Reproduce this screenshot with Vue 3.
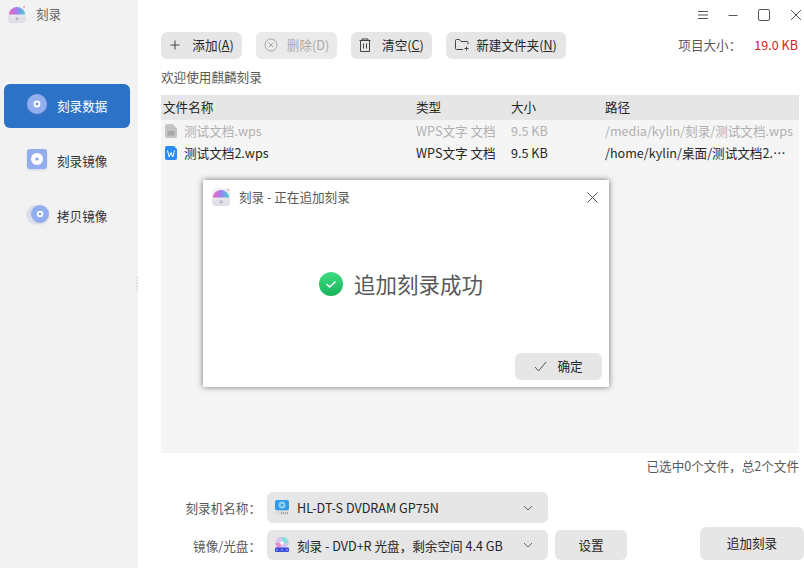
<script setup>
const nav = [
  { label: '刻录数据', kind: 'disc', active: true },
  { label: '刻录镜像', kind: 'image', active: false },
  { label: '拷贝镜像', kind: 'copy', active: false },
]
const rows = [
  { name: '测试文档.wps', type: 'WPS文字 文档', size: '9.5 KB', path: '/media/kylin/刻录/测试文档.wps', off: true },
  { name: '测试文档2.wps', type: 'WPS文字 文档', size: '9.5 KB', path: '/home/kylin/桌面/测试文档2.…', off: false },
]
</script>

<template>
  <div class="app">
    <aside class="side">
      <div class="brand">
        <svg class="logo" width="18" height="18" viewBox="0 0 18 18">
          <defs>
            <linearGradient id="lg1" x1="0" y1="0" x2="1" y2="0">
              <stop offset="0" stop-color="#f066b8" /><stop offset=".5" stop-color="#a07ff0" /><stop offset="1" stop-color="#3fd6d0" />
            </linearGradient>
            <linearGradient id="lg0" x1="0" y1="0" x2="0" y2="1">
              <stop offset="0" stop-color="#f4f4f8" /><stop offset="1" stop-color="#dcdce6" />
            </linearGradient>
          </defs>
          <rect x="0" y="0" width="18" height="18" rx="4" fill="url(#lg0)" />
          <path d="M1 9.500a8 7.500 0 0 1 16 0z" fill="url(#lg1)" />
          <circle cx="9" cy="13.800" r="1.500" fill="#b5b5c0" />
          <circle cx="16" cy="2" r=".8" fill="#f0605a" />
        </svg>
        <span>刻录</span>
      </div>
      <nav class="nav">
        <div v-for="n in nav" :key="n.label" class="nav-item" :class="{ active: n.active }">
          <svg class="nav-icon" width="22" height="22" viewBox="0 0 22 22">
            <template v-if="n.kind === 'disc'">
              <circle cx="10" cy="10" r="10" fill="#93aeee" />
              <circle cx="10" cy="10" r="3.400" fill="#fff" />
              <circle cx="10" cy="10" r="1.400" fill="#6d8fdc" />
            </template>
            <template v-else-if="n.kind === 'image'">
              <rect x="0" y="0" width="20" height="20" rx="3" fill="#93aeee" />
              <circle cx="10" cy="10" r="6" fill="#fff" />
              <circle cx="10" cy="10" r="1.500" fill="#7b9ae2" />
            </template>
            <template v-else>
              <circle cx="9" cy="10" r="9" fill="#d9dde8" />
              <circle cx="13" cy="10" r="9" fill="#93aeee" />
              <circle cx="13" cy="10" r="3.200" fill="#fff" />
              <circle cx="13" cy="10" r="1.300" fill="#7b9ae2" />
            </template>
          </svg>
          <span>{{ n.label }}</span>
        </div>
      </nav>
      <div class="grip"></div>
    </aside>

    <main class="main">
      <div class="winbar">
        <svg width="10" height="10" viewBox="0 0 10 10" class="wi"><path d="M0 1.500h10M0 5h10M0 8.500h10" stroke="#555" fill="none" /></svg>
        <svg width="10" height="10" viewBox="0 0 10 10" class="wi"><path d="M.5 5.500h9" stroke="#555" fill="none" /></svg>
        <svg width="12" height="12" viewBox="0 0 12 12" class="wi"><rect x=".5" y=".5" width="11" height="11" rx="1.500" stroke="#555" fill="none" /></svg>
        <svg width="12" height="12" viewBox="0 0 12 12" class="wi"><path d="M1 1l10 10M11 1L1 11" stroke="#555" fill="none" /></svg>
      </div>

      <div class="toolbar">
        <button class="btn b-add">
          <svg width="12" height="12" viewBox="0 0 12 12"><path d="M6 1.500v9M1.500 6h9" stroke="#444" fill="none" /></svg>
          <span>添加(<u>A</u>)</span>
        </button>
        <button class="btn b-add off">
          <svg width="14" height="14" viewBox="0 0 14 14"><circle cx="7" cy="7" r="6" stroke="#aaa" fill="none" /><path d="M4.800 4.800l4.400 4.400M9.200 4.800L4.800 9.200" stroke="#aaa" fill="none" /></svg>
          <span>删除(D)</span>
        </button>
        <button class="btn b-add">
          <svg width="12" height="14" viewBox="0 0 12 14"><path d="M.5 2.500h11M3 2.500V1h6v1.500M1.500 2.500v11h9v-11M4.500 5.500v5M7.500 5.500v5" stroke="#444" fill="none" /></svg>
          <span>清空(<u>C</u>)</span>
        </button>
        <button class="btn b-new">
          <svg width="14" height="12" viewBox="0 0 14 12"><path d="M8 10.500H1.500a1 1 0 0 1-1-1v-8a1 1 0 0 1 1-1h3l1.500 2h6a1 1 0 0 1 1 1v2M9.500 9.500h4M11.500 7.500v4" stroke="#444" fill="none" /></svg>
          <span>新建文件夹(<u>N</u>)</span>
        </button>
        <div class="project">
          <span class="pl">项目大小：</span><span class="pv">19.0 KB</span>
        </div>
      </div>

      <div class="welcome">欢迎使用麒麟刻录</div>

      <section class="table">
        <div class="row head">
          <span class="c-name">文件名称</span><span class="c-type">类型</span><span class="c-size">大小</span><span class="c-path">路径</span>
        </div>
        <div v-for="r in rows" :key="r.name" class="row item" :class="{ off: r.off }">
          <span class="c-name name">
            <svg width="12" height="14" viewBox="0 0 12 14">
              <template v-if="r.off">
                <path d="M2 0h5.500L12 4.500V12a2 2 0 0 1-2 2H2a2 2 0 0 1-2-2V2a2 2 0 0 1 2-2z" fill="#c4c4c4" />
                <rect x="2.500" y="7" width="7" height="4.500" fill="#a8a8a8" />
              </template>
              <template v-else>
                <path d="M2 0h7l3 3v9a2 2 0 0 1-2 2H2a2 2 0 0 1-2-2V2a2 2 0 0 1 2-2z" fill="#2a8cf0" />
                <path d="M2.500 4.500l1.700 6.500 1.800-4.500 1.800 4.500 1.700-6.500" stroke="#fff" fill="none" />
              </template>
            </svg>
            <span>{{ r.name }}</span>
          </span>
          <span class="c-type">{{ r.type }}</span>
          <span class="c-size">{{ r.size }}</span>
          <span class="c-path">{{ r.path }}</span>
        </div>
      </section>

      <div class="status">已选中0个文件，总2个文件</div>

      <div class="bottom">
        <div class="fields">
          <div class="field">
            <label>刻录机名称：</label>
            <div class="select">
              <svg width="14" height="16" viewBox="0 0 14 16">
                <rect x="0" y="0" width="14" height="10.500" rx="2" fill="#2f9be8" />
                <circle cx="7" cy="5" r="3.500" fill="#8fd0f5" />
                <circle cx="7" cy="5" r="1.200" fill="#2f9be8" />
                <rect x="0" y="10.500" width="14" height="4.500" rx="1" fill="#dcdcdc" />
                <path d="M6 13h7" stroke="#666" stroke-dasharray="1 1" />
              </svg>
              <span class="val">HL-DT-S DVDRAM GP75N</span>
              <svg class="chev" width="10" height="6" viewBox="0 0 10 6"><path d="M1 1l4 4 4-4" stroke="#666" fill="none" /></svg>
            </div>
          </div>
          <div class="field">
            <label>镜像/光盘：</label>
            <div class="select short">
              <svg width="14" height="16" viewBox="0 0 14 16">
                <circle cx="7" cy="6" r="6.500" fill="#d7c3ef" />
                <path d="M7 6V-.5a6.500 6.500 0 0 1 6.500 6.500z" fill="#86e0d6" />
                <path d="M7 6H.5a6.500 6.500 0 0 0 4 6z" fill="#f08ac8" />
                <circle cx="7" cy="6" r="1.800" fill="#fff" />
                <rect x="0" y="10.500" width="14" height="4.500" rx="1" fill="#3d4fdc" />
                <path d="M2 12v2M7 12v2M12 12v2" stroke="#a8b2f5" />
              </svg>
              <span class="val">刻录 - DVD+R 光盘，剩余空间 4.4 GB</span>
              <svg class="chev" width="10" height="6" viewBox="0 0 10 6"><path d="M1 1l4 4 4-4" stroke="#666" fill="none" /></svg>
            </div>
            <button class="btn b-set"><span>设置</span></button>
          </div>
        </div>
        <button class="btn b-burn"><span>追加刻录</span></button>
      </div>
    </main>

    <div class="dialog">
      <div class="d-title">
        <svg width="18" height="18" viewBox="0 0 18 18">
          <rect x="0" y="0" width="18" height="18" rx="4" fill="url(#lg0)" />
          <path d="M1 9.500a8 7.500 0 0 1 16 0z" fill="url(#lg1)" />
          <circle cx="9" cy="13.800" r="1.500" fill="#b5b5c0" />
          <circle cx="16" cy="2" r=".8" fill="#f0605a" />
        </svg>
        <span class="d-text">刻录 - 正在追加刻录</span>
        <svg class="d-close" width="11" height="11" viewBox="0 0 11 11"><path d="M.5.500l10 10M10.500.500l-10 10" stroke="#555" fill="none" /></svg>
      </div>
      <div class="d-body">
        <svg width="24" height="24" viewBox="0 0 24 24">
          <defs>
            <linearGradient id="g2" x1="0" y1="0" x2="0" y2="1">
              <stop offset="0" stop-color="#3fdc82" /><stop offset="1" stop-color="#17b45c" />
            </linearGradient>
          </defs>
          <circle cx="12" cy="12" r="12" fill="url(#g2)" />
          <path d="M7.500 12l3.200 3 5.800-5.500" stroke="#fff" stroke-width="1.600" fill="none" />
        </svg>
        <span>追加刻录成功</span>
      </div>
      <div class="d-foot">
        <button class="btn b-ok">
          <svg width="13" height="11" viewBox="0 0 13 11"><path d="M1 6l3.500 4L12 1" stroke="#555" fill="none" /></svg>
          <span>确定</span>
        </button>
      </div>
    </div>
  </div>
</template>

<style>
html, body { margin: 0; padding: 0; background: #fff; }
</style>

<style scoped>
.app {
  position: relative;
  display: flex;
  width: 804px;
  height: 568px;
  overflow: hidden;
  background: #fff;
  font-family: "Noto Sans CJK SC", "Noto Sans", sans-serif;
  font-size: 12.600px;
  color: #262626;
}
button { font-family: inherit; font-size: 12.600px; color: inherit; border: 0; padding: 0; }
.side { position: relative; width: 138px; flex: none; background: #f2f2f2; padding: 0 8px 0 4px; box-sizing: border-box; }
.grip {
  position: absolute;
  right: 0;
  top: 277px;
  width: 2px;
  height: 15px;
  background: repeating-linear-gradient(to bottom, #d4d4d4 0 1px, transparent 1px 3px);
}
.brand { display: flex; align-items: center; gap: 10px; height: 28px; padding-left: 4px; color: #666; }
.brand span { margin-bottom: 2px; }
.nav { display: flex; flex-direction: column; gap: 11px; margin-top: 56px; }
.nav-item { display: flex; align-items: center; height: 44px; padding-left: 23px; border-radius: 6px; color: #333; }
.nav-item span { margin-left: 8px; margin-bottom: 2px; }
.nav-icon { margin-top: -2px; filter: drop-shadow(0 1px 1px rgba(120, 140, 200, .3)); }
.nav-item.active { background: #2c72c7; color: #fff; }
.main { flex: 1; min-width: 0; display: flex; flex-direction: column; padding: 0 5px 0 23px; }
.winbar { display: flex; justify-content: flex-end; align-items: center; gap: 20px; height: 29px; margin-right: -3px; }
.wi { flex: none; }
.toolbar { display: flex; align-items: center; height: 28px; margin-top: 2px; gap: 14px; }
.btn { display: flex; align-items: center; justify-content: center; background: #e6e6e6; border-radius: 6px; }
.btn span { margin-bottom: 2px; }
.b-add { width: 81px; height: 27px; gap: 11px; }
.b-new { width: 120px; height: 27px; gap: 7px; }
.btn.off { color: #aaa; background: #eaeaea; gap: 9px; }
.project { margin-left: auto; display: flex; color: #595959; margin-right: 1px; margin-bottom: 2px; }
.pl { width: 70px; }
.pv { color: #d92020; margin-left: 6px; }
.welcome { margin-top: 8px; height: 19px; line-height: 19px; color: #595959; }
.table { height: 358px; margin-top: 9px; background: #f5f5f5; display: flex; flex-direction: column; }
.row { display: flex; align-items: center; }
.row > span { margin-bottom: 2px; }
.head { height: 25px; background: #e6e6e6; }
.item { height: 22px; }
.item.off { color: #b0b0b0; }
.c-name { width: 253px; padding-left: 2px; box-sizing: border-box; }
.name { display: flex; align-items: center; gap: 7px; }
.name svg { margin-left: 2px; margin-top: 2px; }
.c-type { flex: 0 0 95px; padding-left: 2px; box-sizing: border-box; white-space: nowrap; }
.c-size { flex: 0 0 94px; padding-left: 2px; box-sizing: border-box; white-space: nowrap; }
.c-path { padding-left: 2px; white-space: nowrap; }
.status { margin-top: 4px; height: 18px; line-height: 18px; text-align: right; color: #595959; }
.bottom { display: flex; justify-content: space-between; align-items: flex-end; margin-top: 17px; margin-right: -5px; }
.fields { display: flex; flex-direction: column; gap: 7px; }
.field { display: flex; align-items: center; }
.field label { width: 100px; margin-right: 6px; text-align: right; color: #595959; white-space: nowrap; }
.select { display: flex; align-items: center; gap: 8px; width: 281px; height: 31px; padding: 0 15px 0 8px; box-sizing: border-box; background: #e6e6e6; border-radius: 6px; }
.select.short { height: 30px; }
.select .val { flex: 1; white-space: nowrap; }
.b-set { width: 72px; height: 30px; margin-left: 7px; }
.b-burn { width: 104px; height: 33px; }
.dialog {
  position: absolute;
  left: 203px;
  top: 180px;
  width: 406px;
  height: 207px;
  background: #fff;
  box-shadow: 0 0 6px rgba(0, 0, 0, .55);
  display: flex;
  flex-direction: column;
}
.d-title { display: flex; align-items: center; gap: 9px; height: 34px; padding: 0 11px 0 9px; color: #595959; }
.d-text { margin-bottom: 2px; }
.d-close { margin-left: auto; }
.d-body { flex: 1; display: flex; align-items: center; justify-content: center; gap: 11px; font-size: 21.500px; color: #595959; padding-right: 10px; }
.d-foot { display: flex; justify-content: flex-end; padding: 0 7px 7px 0; }
.b-ok { width: 87px; height: 27px; gap: 10px; }
</style>
